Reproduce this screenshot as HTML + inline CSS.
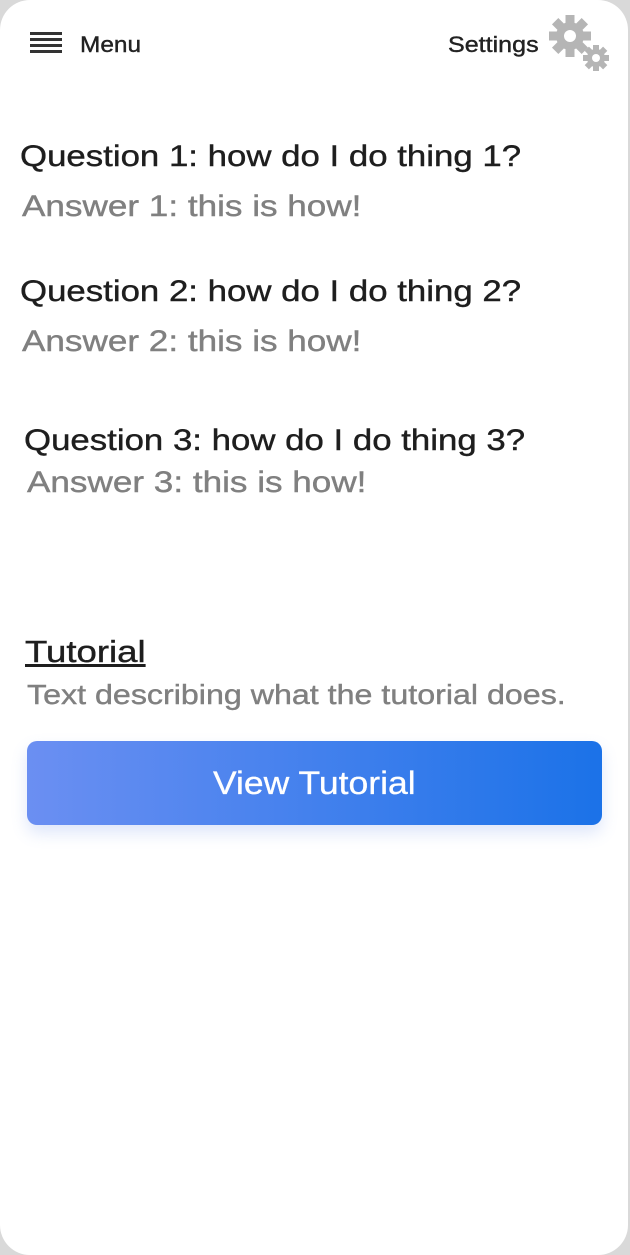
<!DOCTYPE html>
<html><head><meta charset="utf-8"><style>
html,body{margin:0;padding:0;}
body{width:630px;height:1255px;background:#d9d9d9;position:relative;overflow:hidden;font-family:"Liberation Sans",Arial,sans-serif;}
.card{position:absolute;left:0;top:0;width:628px;height:1255px;background:#fff;border-radius:30px;}
.t{position:absolute;white-space:nowrap;line-height:1;transform-origin:0 50%;-webkit-text-stroke:0.4px currentColor;}
.q{font-size:30px;color:#1e1e1e;transform:scaleX(1.16);}
.a{font-size:30px;color:#808080;transform:scaleX(1.17);}
.btn{position:absolute;left:27px;top:741px;width:575px;height:84px;border-radius:10px;background:linear-gradient(90deg,#6b8ff2,#1b72e8);box-shadow:0 8px 16px rgba(90,130,230,0.2);color:#fff;font-size:32px;text-align:center;line-height:84px;}
.btn span{display:inline-block;transform:scaleX(1.11);-webkit-text-stroke:0.3px #fff;}
</style></head><body>
<div class="card">
<svg style="position:absolute;left:30px;top:32px" width="32" height="22"><g fill="#333"><rect y="0" width="32" height="3"/><rect y="6" width="32" height="3"/><rect y="12" width="32" height="3"/><rect y="18" width="32" height="3"/></g></svg>
<div class="t" style="left:80px;top:34px;font-size:22px;color:#222;transform:scaleX(1.11)">Menu</div>
<div class="t" style="left:448px;top:34px;font-size:22px;color:#222;transform:scaleX(1.14)">Settings</div>
<svg style="position:absolute;left:546px;top:12px" width="66" height="62" viewBox="0 0 66 62">
<g fill="#b5b5b5">
<g transform="translate(24,24)">
<circle r="14"/>
<g><rect x="-4.5" y="-21" width="9" height="42"/><rect x="-4.5" y="-21" width="9" height="42" transform="rotate(45)"/><rect x="-4.5" y="-21" width="9" height="42" transform="rotate(90)"/><rect x="-4.5" y="-21" width="9" height="42" transform="rotate(135)"/></g>
<circle r="6" fill="#fff"/></g>
<g transform="translate(50,46)">
<circle r="9"/>
<g><rect x="-3" y="-13" width="6" height="26"/><rect x="-3" y="-13" width="6" height="26" transform="rotate(45)"/><rect x="-3" y="-13" width="6" height="26" transform="rotate(90)"/><rect x="-3" y="-13" width="6" height="26" transform="rotate(135)"/></g>
<circle r="4" fill="#fff"/></g>
</g></svg>
<div class="t q" style="left:20px;top:142px">Question 1: how do I do thing 1?</div>
<div class="t a" style="left:22px;top:192px">Answer 1: this is how!</div>
<div class="t q" style="left:20px;top:277px">Question 2: how do I do thing 2?</div>
<div class="t a" style="left:22px;top:327px">Answer 2: this is how!</div>
<div class="t q" style="left:24px;top:426px">Question 3: how do I do thing 3?</div>
<div class="t a" style="left:27px;top:468px">Answer 3: this is how!</div>
<div class="t q" style="left:25px;top:636px;font-size:31px;text-decoration:underline;transform:scaleX(1.18)">Tutorial</div>
<div class="t a" style="left:27px;top:681px;font-size:28px;transform:scaleX(1.15)">Text describing what the tutorial does.</div>
<div class="btn"><span>View Tutorial</span></div>
</div>
</body></html>
